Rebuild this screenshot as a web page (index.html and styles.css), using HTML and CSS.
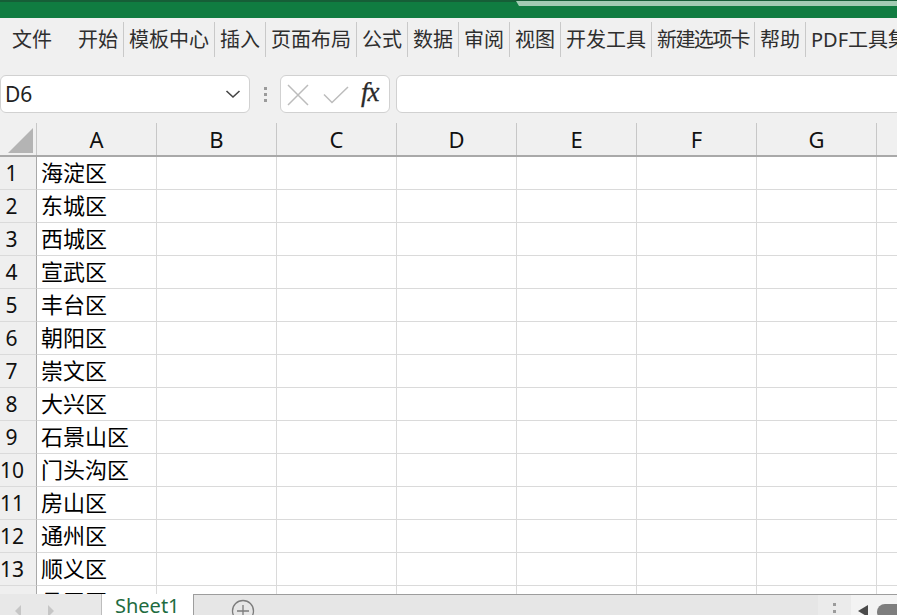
FILE: index.html
```html
<!DOCTYPE html>
<html lang="zh-CN">
<head>
<meta charset="utf-8">
<title>Excel</title>
<link rel="stylesheet" href="styles.css">
</head>
<body>
<div class="titlebar"><div class="title-search"></div></div>
<nav class="ribbon">
  <span class="tab tab-file">文件</span>
  <span class="tab">开始</span>
  <span class="tab">模板中心</span>
  <span class="tab">插入</span>
  <span class="tab">页面布局</span>
  <span class="tab">公式</span>
  <span class="tab">数据</span>
  <span class="tab">审阅</span>
  <span class="tab">视图</span>
  <span class="tab">开发工具</span>
  <span class="tab tab-tight">新建选项卡</span>
  <span class="tab">帮助</span>
  <span class="tab">PDF工具集</span>
</nav>
<div class="fbar">
  <div class="namebox"><span>D6</span>
    <svg class="chev" width="16" height="10" viewBox="0 0 16 10"><polyline points="1.5,2 8,8 14.5,2" fill="none" stroke="#444" stroke-width="1.6"/></svg>
  </div>
  <div class="fdots"><i></i><i></i><i></i></div>
  <div class="fxbox">
    <svg class="ico-x" width="22" height="22" viewBox="0 0 22 22"><path d="M1 1L21 21M21 1L1 21" stroke="#bcbcbc" stroke-width="1.5" fill="none"/></svg>
    <svg class="ico-ok" width="26" height="18" viewBox="0 0 26 18"><polyline points="1,8.5 9,16.5 25,1" stroke="#bcbcbc" stroke-width="1.5" fill="none"/></svg>
    <span class="fx">fx</span>
  </div>
  <div class="finput"></div>
</div>
<div class="sheet">
  <div class="colhead">
    <div class="ch corner"><svg width="25" height="25" viewBox="0 0 25 25"><polygon points="25,0 25,25 0,25" fill="#b4b4b4"/></svg></div>
    <div class="ch">A</div><div class="ch">B</div><div class="ch">C</div><div class="ch">D</div>
    <div class="ch">E</div><div class="ch">F</div><div class="ch">G</div><div class="ch">H</div>
  </div>
  <div class="rows">
    <div class="row"><div class="rh">1</div><div class="c">海淀区</div><div></div><div></div><div></div><div></div><div></div><div></div><div></div></div>
    <div class="row"><div class="rh">2</div><div class="c">东城区</div><div></div><div></div><div></div><div></div><div></div><div></div><div></div></div>
    <div class="row"><div class="rh">3</div><div class="c">西城区</div><div></div><div></div><div></div><div></div><div></div><div></div><div></div></div>
    <div class="row"><div class="rh">4</div><div class="c">宣武区</div><div></div><div></div><div></div><div></div><div></div><div></div><div></div></div>
    <div class="row"><div class="rh">5</div><div class="c">丰台区</div><div></div><div></div><div></div><div></div><div></div><div></div><div></div></div>
    <div class="row"><div class="rh">6</div><div class="c">朝阳区</div><div></div><div></div><div></div><div></div><div></div><div></div><div></div></div>
    <div class="row"><div class="rh">7</div><div class="c">崇文区</div><div></div><div></div><div></div><div></div><div></div><div></div><div></div></div>
    <div class="row"><div class="rh">8</div><div class="c">大兴区</div><div></div><div></div><div></div><div></div><div></div><div></div><div></div></div>
    <div class="row"><div class="rh">9</div><div class="c">石景山区</div><div></div><div></div><div></div><div></div><div></div><div></div><div></div></div>
    <div class="row"><div class="rh">10</div><div class="c">门头沟区</div><div></div><div></div><div></div><div></div><div></div><div></div><div></div></div>
    <div class="row"><div class="rh">11</div><div class="c">房山区</div><div></div><div></div><div></div><div></div><div></div><div></div><div></div></div>
    <div class="row"><div class="rh">12</div><div class="c">通州区</div><div></div><div></div><div></div><div></div><div></div><div></div><div></div></div>
    <div class="row"><div class="rh">13</div><div class="c">顺义区</div><div></div><div></div><div></div><div></div><div></div><div></div><div></div></div>
    <div class="row"><div class="rh">14</div><div class="c">昌平区</div><div></div><div></div><div></div><div></div><div></div><div></div><div></div></div>
  </div>
</div>
<div class="tabbar">
  <div class="tnav">
    <svg width="101" height="21" viewBox="0 0 101 21"><polygon points="21,11 15,17 21,23" fill="#c6c6c6"/><polygon points="48,11 54,17 48,23" fill="#c6c6c6"/></svg>
  </div>
  <div class="sheettab">Sheet1</div>
  <div class="tabrest">
    <svg class="plus" width="26" height="21" viewBox="0 0 26 21"><circle cx="13" cy="17" r="10.5" fill="none" stroke="#7c7c7c" stroke-width="1.3"/><path d="M13 11V23M7 17H19" stroke="#7c7c7c" stroke-width="1.3"/></svg>
    <div class="tdots"><i></i><i></i></div>
    <div class="tscroll">
      <svg width="46" height="21" viewBox="0 0 46 21"><polygon points="7,17 17,11 17,23" fill="#4a4a4a"/><rect x="26" y="10" width="30" height="16" rx="8" fill="#7e7e7e"/></svg>
    </div>
  </div>
</div>
</body>
</html>
```

FILE: styles.css
```css
html, body {
  margin: 0;
  padding: 0;
}
body {
  width: 897px;
  height: 615px;
  overflow: hidden;
  background: #f0f0f0;
  font-family: "Noto Sans", "Noto Sans CJK SC", sans-serif;
  color: #222;
}

/* title bar */
.titlebar {
  height: 18px;
  box-sizing: border-box;
  background: #107c41;
  border-top: 2px solid #165e37;
  display: flex;
}
.title-search {
  margin-left: 516px;
  margin-top: -1px;
  height: 5px;
  flex: 1;
  background: #a2cbb3;
  clip-path: polygon(0 0, 100% 0, 100% 100%, 3px 100%);
}

/* ribbon tabs */
.ribbon {
  height: 57px;
  box-sizing: border-box;
  padding: 4px 0 0 7px;
  display: flex;
  align-items: flex-start;
  white-space: nowrap;
  overflow: hidden;
}
.tab {
  height: 35px;
  line-height: 35px;
  padding: 0 5px;
  font-size: 20px;
  color: #2e2e2e;
  border-right: 1px solid #c9c9c9;
  flex: none;
}
.tab-file {
  border-right: none;
  margin-right: 16px;
}
.tab-tight {
  letter-spacing: -1.6px;
}

/* formula bar */
.fbar {
  height: 38px;
  display: flex;
  margin-bottom: 10px;
}
.namebox {
  width: 250px;
  box-sizing: border-box;
  border: 1px solid #d1d1d1;
  border-radius: 6px;
  background: #fff;
  display: flex;
  align-items: center;
  justify-content: space-between;
  padding: 0 8px 0 4px;
  font-size: 21px;
  color: #222;
}
.chev {
  display: block;
}
.fdots {
  width: 30px;
  display: flex;
  flex-direction: column;
  align-items: center;
  justify-content: center;
  gap: 3px;
}
.fdots i {
  display: block;
  width: 3px;
  height: 3px;
  background: #9b9b9b;
}
.fxbox {
  width: 110px;
  box-sizing: border-box;
  border: 1px solid #d1d1d1;
  border-radius: 6px;
  background: #fff;
  display: flex;
  align-items: center;
  padding-left: 6px;
}
.ico-x {
  display: block;
  margin-top: 2px;
}
.ico-ok {
  display: block;
  margin-left: 14px;
  margin-top: 1px;
}
.fx {
  margin-left: 12px;
  font-family: "Liberation Serif", serif;
  font-style: italic;
  font-size: 27px;
  color: #2a2a2a;
  letter-spacing: -1px;
  line-height: 1;
  margin-top: -3px;
  -webkit-text-stroke: 0.3px #2a2a2a;
}
.finput {
  flex: 1;
  margin-left: 6px;
  margin-right: -8px;
  border: 1px solid #d1d1d1;
  border-radius: 6px;
  background: #fff;
}

/* sheet grid */
.colhead {
  height: 34px;
  box-sizing: border-box;
  border-bottom: 2px solid #a9a9a9;
  display: grid;
  grid-template-columns: 37px repeat(8, 120px);
  overflow: hidden;
}
.ch {
  box-sizing: border-box;
  border-right: 1px solid #c7c7c7;
  text-align: center;
  line-height: 32px;
  font-size: 22px;
  color: #111;
}
.corner svg {
  display: block;
  margin: 5px 0 0 8px;
}
.rows {
  height: 437px;
  overflow: hidden;
  background: #fff;
}
.row {
  display: grid;
  grid-template-columns: 37px repeat(8, 120px);
  height: 33px;
}
.row > div {
  box-sizing: border-box;
  border-right: 1px solid #dadada;
  border-bottom: 1px solid #dadada;
}
.row > .rh {
  background: #efefef;
  border-right-color: #a9a9a9;
  text-align: center;
  padding-right: 13px;
  font-size: 21px;
  line-height: 32px;
  color: #111;
}
.row > .c {
  font-size: 22px;
  line-height: 28px;
  padding-left: 4px;
  white-space: nowrap;
  color: #000;
  font-family: "Noto Sans CJK SC", sans-serif;
}

/* sheet tab bar */
.tabbar {
  height: 21px;
  display: flex;
  background: #e6e6e6;
  overflow: hidden;
}
.tnav {
  width: 101px;
  flex: none;
  background: #e8e8e8;
  border-right: 1px solid #bdbdbd;
}
.tnav svg {
  display: block;
}
.sheettab {
  width: 91px;
  flex: none;
  box-sizing: border-box;
  background: #fff;
  color: #1e6b40;
  font-size: 20px;
  line-height: 24px;
  padding-left: 13px;
  white-space: nowrap;
}
.tabrest {
  flex: 1;
  display: flex;
  border-top: 1px solid #9d9d9d;
  border-left: 1px solid #9d9d9d;
}
.plus {
  display: block;
  margin-left: 36px;
  margin-top: -1px;
}
.tdots {
  margin-left: auto;
  width: 33px;
  background: #ebebeb;
  display: flex;
  flex-direction: column;
  align-items: center;
  padding-top: 8px;
  box-sizing: border-box;
  gap: 4px;
}
.tdots i {
  display: block;
  width: 3px;
  height: 3px;
  background: #9b9b9b;
}
.tscroll {
  width: 46px;
  background: #f3f3f3;
}
.tscroll svg {
  display: block;
  margin-top: -1px;
}
```
